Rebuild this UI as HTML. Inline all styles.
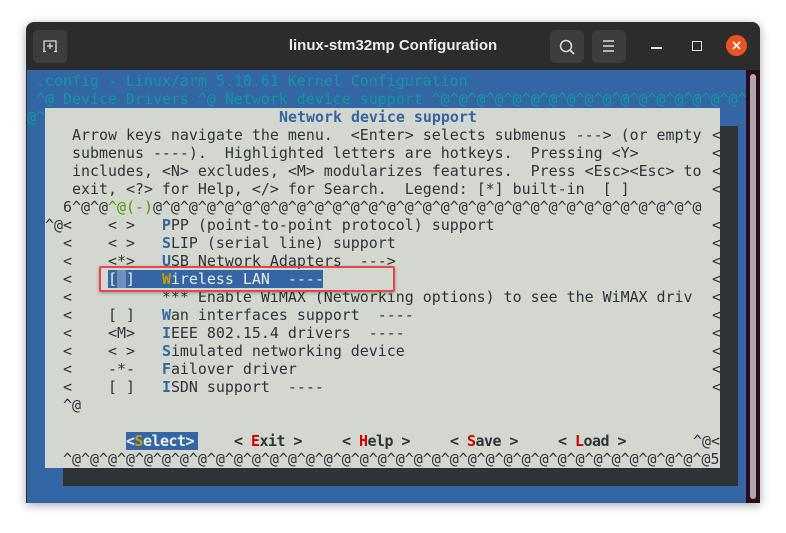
<!DOCTYPE html>
<html><head><meta charset="utf-8"><style>
body{margin:0;width:786px;height:533px;background:#fff;position:relative;overflow:hidden;font-family:"DejaVu Sans Mono",monospace}
.abs{position:absolute}
.t{position:absolute;font-family:"DejaVu Sans Mono","Liberation Mono",monospace;font-size:14.95px;line-height:18px;height:18px;white-space:pre;color:#2e3436}
.c{color:#0e9aa0}
.h{color:#3465a4;font-weight:bold}
.r{color:#cc0000}
.g{color:#4e9a06}
.btn{font-weight:bold;letter-spacing:-0.5px}
</style></head><body>
<div class="abs" style="left:26px;top:22px;width:734px;height:481px;background:#2c2c2c;border-radius:8px 8px 0 0;box-shadow:0 2px 10px rgba(0,0,0,.35)"></div>
<div class="abs" style="left:33px;top:30px;width:34px;height:33px;background:#3d3d3d;border-radius:5px"></div>
<svg class="abs" style="left:42px;top:38px" width="16" height="16" viewBox="0 0 16 16"><path d="M2 13V3h12v10M5 8h6M8 5v6M1 13.5h3M12 13.5h3" stroke="#ddd" stroke-width="1.3" fill="none"/></svg>
<div class="abs" style="left:0;top:37px;width:786px;text-align:center;font-family:'Liberation Sans',sans-serif;font-weight:bold;font-size:15px;color:#ececec">linux-stm32mp Configuration</div>
<div class="abs" style="left:550px;top:30px;width:34px;height:33px;background:#3d3d3d;border-radius:5px"></div>
<svg class="abs" style="left:558px;top:38px" width="18" height="18" viewBox="0 0 18 18"><circle cx="8" cy="8" r="5.5" stroke="#ddd" stroke-width="1.5" fill="none"/><path d="M12 12l4 4" stroke="#ddd" stroke-width="1.6"/></svg>
<div class="abs" style="left:592px;top:30px;width:34px;height:33px;background:#3d3d3d;border-radius:5px"></div>
<svg class="abs" style="left:601px;top:39px" width="16" height="14"><path d="M2 2h11M2 7h11M2 12h11" stroke="#ddd" stroke-width="1.4"/></svg>
<div class="abs" style="left:651px;top:47px;width:11px;height:1.5px;background:#ddd"></div>
<div class="abs" style="left:692px;top:41px;width:8px;height:8px;border:1.5px solid #ddd"></div>
<div class="abs" style="left:726px;top:35px;width:21px;height:21px;border-radius:50%;background:#e95420"></div>
<svg class="abs" style="left:731px;top:40px" width="11" height="11"><path d="M2 2l7 7M9 2l-7 7" stroke="#fff" stroke-width="1.6"/></svg>

<div class="abs" style="left:27px;top:70px;width:720px;height:433px;background:#3465a4"></div>
<div class="abs" style="left:746px;top:70px;width:14px;height:433px;background:#2b0b1f"></div>
<div class="abs" style="left:750px;top:74px;width:6px;height:425px;background:#b0a9ac;border-radius:3px"></div>

<div class="abs" style="left:63px;top:126px;width:675px;height:360px;background:#2e3436"></div>
<div class="abs" style="left:45px;top:108px;width:675px;height:360px;background:#d3d7cf"></div>

<div class="t c" style="left:27px;top:72px"> .config - Linux/arm 5.10.61 Kernel Configuration</div>
<div class="t c" style="left:27px;top:90px;width:719px;overflow:hidden"> ^@ Device Drivers ^@ Network device support ^@^@^@^@^@^@^@^@^@^@^@^@^@^@^@^@^@^@^@</div>
<div class="t c" style="left:27px;top:108px">@^</div>
<div class="t h" style="left:279px;top:108px">Network device support</div>
<div class="t" style="left:72px;top:126px">Arrow keys navigate the menu.  &lt;Enter&gt; selects submenus ---&gt; (or empty</div>
<div class="t" style="left:72px;top:144px">submenus ----).  Highlighted letters are hotkeys.  Pressing &lt;Y&gt;</div>
<div class="t" style="left:72px;top:162px">includes, &lt;N&gt; excludes, &lt;M&gt; modularizes features.  Press &lt;Esc&gt;&lt;Esc&gt; to</div>
<div class="t" style="left:72px;top:180px">exit, &lt;?&gt; for Help, &lt;/&gt; for Search.  Legend: [*] built-in  [ ]</div>
<div class="t" style="left:63px;top:198px;width:657px;overflow:hidden">6^@^@<span class="g">^@(-)</span>@^@^@^@^@^@^@^@^@^@^@^@^@^@^@^@^@^@^@^@^@^@^@^@^@^@^@^@^@^@^@</div>
<div class="t" style="left:712px;top:126px">&lt;<br>&lt;<br>&lt;<br>&lt;</div>
<div class="t" style="left:712px;top:216px;height:180px">&lt;<br>&lt;<br>&lt;<br>&lt;<br>&lt;<br>&lt;<br>&lt;<br>&lt;<br>&lt;<br>&lt;</div>

<div class="t" style="left:45px;top:216px">^@&lt;    &lt; &gt;   <span class="h">P</span>PP (point-to-point protocol) support</div>
<div class="t" style="left:63px;top:234px">&lt;    &lt; &gt;   <span class="h">S</span>LIP (serial line) support</div>
<div class="t" style="left:63px;top:252px">&lt;    &lt;*&gt;   <span class="h">U</span>SB Network Adapters  ---&gt;</div>
<div class="abs" style="left:108px;top:270px;width:215px;height:18px;background:#3465a4"></div>
<div class="abs" style="left:117px;top:270px;width:9px;height:18px;background:#6f8fbf"></div>
<div class="t" style="left:63px;top:270px">&lt;    <span style="color:#eeeeec">[ ]</span>   <span style="color:#c4a000;font-weight:bold">W</span><span style="color:#eeeeec">ireless LAN  ----</span></div>
<div class="t" style="left:63px;top:288px;width:650px;overflow:hidden">&lt;          *** Enable WiMAX (Networking options) to see the WiMAX driv</div>
<div class="t" style="left:63px;top:306px">&lt;    [ ]   <span class="h">W</span>an interfaces support  ----</div>
<div class="t" style="left:63px;top:324px">&lt;    &lt;M&gt;   <span class="h">I</span>EEE 802.15.4 drivers  ----</div>
<div class="t" style="left:63px;top:342px">&lt;    &lt; &gt;   <span class="h">S</span>imulated networking device</div>
<div class="t" style="left:63px;top:360px">&lt;    -*-   <span class="h">F</span>ailover driver</div>
<div class="t" style="left:63px;top:378px">&lt;    [ ]   <span class="h">I</span>SDN support  ----</div>
<div class="t" style="left:63px;top:396px">^@</div>
<div class="abs" style="left:126px;top:432px;width:72px;height:18px;background:#3465a4"></div>
<div class="t btn" style="left:126px;top:432px;color:#eeeeec">&lt;<span style="color:#c4a000">S</span>elect&gt;</div>
<div class="t btn" style="left:234px;top:432px">&lt; <span class="r">E</span>xit &gt;</div>
<div class="t btn" style="left:342px;top:432px">&lt; <span class="r">H</span>elp &gt;</div>
<div class="t btn" style="left:450px;top:432px">&lt; <span class="r">S</span>ave &gt;</div>
<div class="t btn" style="left:558px;top:432px">&lt; <span class="r">L</span>oad &gt;</div>
<div class="t" style="left:693px;top:432px;width:27px;overflow:hidden">^@&lt;</div>
<div class="t" style="left:63px;top:450px;width:657px;overflow:hidden">^@^@^@^@^@^@^@^@^@^@^@^@^@^@^@^@^@^@^@^@^@^@^@^@^@^@^@^@^@^@^@^@^@^@^@^@5</div>

<div class="abs" style="left:99px;top:266px;width:292px;height:22px;border:2px solid #e8474a;border-radius:2px;box-shadow:0 1px 3px rgba(0,0,0,.3)"></div>
</body></html>
